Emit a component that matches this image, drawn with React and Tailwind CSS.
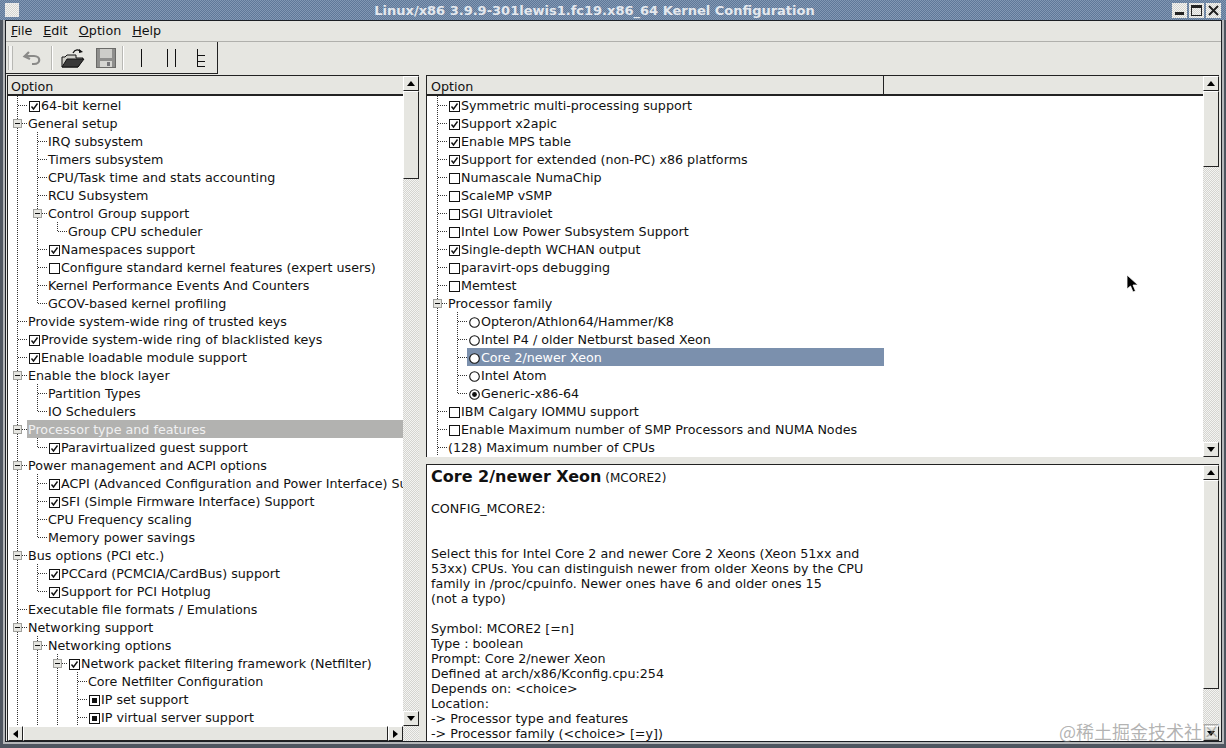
import React from "react";

const FONT = "font-['DejaVu_Sans',sans-serif]";
const STIPPLE = "bg-[repeating-conic-gradient(#d4d4d0_0%_25%,#f4f4f2_0%_50%)] bg-[length:2px_2px]";

const leftRows = [
  { l: 0, c: "on", t: "64-bit kernel" },
  { l: 0, e: 1, t: "General setup" },
  { l: 1, t: "IRQ subsystem" },
  { l: 1, t: "Timers subsystem" },
  { l: 1, t: "CPU/Task time and stats accounting" },
  { l: 1, t: "RCU Subsystem" },
  { l: 1, e: 1, t: "Control Group support" },
  { l: 2, t: "Group CPU scheduler" },
  { l: 1, c: "on", t: "Namespaces support" },
  { l: 1, c: "off", t: "Configure standard kernel features (expert users)" },
  { l: 1, t: "Kernel Performance Events And Counters" },
  { l: 1, t: "GCOV-based kernel profiling" },
  { l: 0, t: "Provide system-wide ring of trusted keys" },
  { l: 0, c: "on", t: "Provide system-wide ring of blacklisted keys" },
  { l: 0, c: "on", t: "Enable loadable module support" },
  { l: 0, e: 1, t: "Enable the block layer" },
  { l: 1, t: "Partition Types" },
  { l: 1, t: "IO Schedulers" },
  { l: 0, e: 1, t: "Processor type and features", sel: "grey" },
  { l: 1, c: "on", t: "Paravirtualized guest support" },
  { l: 0, e: 1, t: "Power management and ACPI options" },
  { l: 1, c: "on", t: "ACPI (Advanced Configuration and Power Interface) Support" },
  { l: 1, c: "on", t: "SFI (Simple Firmware Interface) Support" },
  { l: 1, t: "CPU Frequency scaling" },
  { l: 1, t: "Memory power savings" },
  { l: 0, e: 1, t: "Bus options (PCI etc.)" },
  { l: 1, c: "on", t: "PCCard (PCMCIA/CardBus) support" },
  { l: 1, c: "on", t: "Support for PCI Hotplug" },
  { l: 0, t: "Executable file formats / Emulations" },
  { l: 0, e: 1, t: "Networking support" },
  { l: 1, e: 1, t: "Networking options" },
  { l: 2, e: 1, c: "on", t: "Network packet filtering framework (Netfilter)" },
  { l: 3, t: "Core Netfilter Configuration" },
  { l: 3, c: "mod", t: "IP set support" },
  { l: 3, c: "mod", t: "IP virtual server support" },
];

const rightRows = [
  { l: 0, c: "on", t: "Symmetric multi-processing support" },
  { l: 0, c: "on", t: "Support x2apic" },
  { l: 0, c: "on", t: "Enable MPS table" },
  { l: 0, c: "on", t: "Support for extended (non-PC) x86 platforms" },
  { l: 0, c: "off", t: "Numascale NumaChip" },
  { l: 0, c: "off", t: "ScaleMP vSMP" },
  { l: 0, c: "off", t: "SGI Ultraviolet" },
  { l: 0, c: "off", t: "Intel Low Power Subsystem Support" },
  { l: 0, c: "on", t: "Single-depth WCHAN output" },
  { l: 0, c: "off", t: "paravirt-ops debugging" },
  { l: 0, c: "off", t: "Memtest" },
  { l: 0, e: 1, t: "Processor family" },
  { l: 1, c: "radio", t: "Opteron/Athlon64/Hammer/K8" },
  { l: 1, c: "radio", t: "Intel P4 / older Netburst based Xeon" },
  { l: 1, c: "radio", t: "Core 2/newer Xeon", sel: "blue" },
  { l: 1, c: "radio", t: "Intel Atom" },
  { l: 1, c: "radioOn", t: "Generic-x86-64" },
  { l: 0, c: "off", t: "IBM Calgary IOMMU support" },
  { l: 0, c: "off", t: "Enable Maximum number of SMP Processors and NUMA Nodes" },
  { l: 0, t: "(128) Maximum number of CPUs" },
];

const helpLines = [
  "CONFIG_MCORE2:",
  "",
  "",
  "Select this for Intel Core 2 and newer Core 2 Xeons (Xeon 51xx and",
  "53xx) CPUs. You can distinguish newer from older Xeons by the CPU",
  "family in /proc/cpuinfo. Newer ones have 6 and older ones 15",
  "(not a typo)",
  "",
  "Symbol: MCORE2 [=n]",
  "Type : boolean",
  "Prompt: Core 2/newer Xeon",
  "Defined at arch/x86/Kconfig.cpu:254",
  "Depends on: <choice>",
  "Location:",
  "-> Processor type and features",
  "-> Processor family (<choice> [=y])",
];

// does a row at this level have a following sibling (list is cut off at the bottom, so the end counts as open)
function continues(rows, i, level) {
  for (let j = i + 1; j < rows.length; j++) {
    if (rows[j].l === level) return true;
    if (rows[j].l < level) return false;
  }
  return true;
}

function Connector({ rows, i, level }) {
  const row = rows[i];
  const own = level === row.l;
  const more = continues(rows, i, level);
  if (!own && !more) return <span className="w-5 h-[18px] shrink-0" />;
  return (
    <svg className="w-5 h-[18px] shrink-0" viewBox="0 0 20 18" shapeRendering="crispEdges">
      <line x1="9.5" y1="0" x2="9.5" y2={more ? 18 : 9} stroke="#333" strokeDasharray="1 1" />
      {own && <line x1="10" y1="9.5" x2="20" y2="9.5" stroke="#333" strokeDasharray="1 1" />}
      {own && row.e && (
        <g>
          <rect x="5.5" y="5.5" width="8" height="8" fill="#e6e6e1" stroke="#a0a09c" />
          <line x1="7" y1="9.5" x2="12" y2="9.5" stroke="#111" />
        </g>
      )}
    </svg>
  );
}

function Mark({ c }) {
  if (c === "radio" || c === "radioOn") {
    return (
      <svg className="w-[11px] h-[11px] ml-px mr-px shrink-0" viewBox="0 0 11 11">
        <circle cx="5.5" cy="5.5" r="4.8" fill="#fff" stroke="#111" strokeWidth="1.1" />
        {c === "radioOn" && <circle cx="5.5" cy="5.5" r="2.4" fill="#111" />}
      </svg>
    );
  }
  return (
    <svg className="w-[11px] h-[11px] ml-px mr-[1px] shrink-0" viewBox="0 0 11 11" shapeRendering="crispEdges">
      <rect x="0.5" y="0.5" width="10" height="10" fill="#fff" stroke="#111" />
      {c === "on" && (
        <path d="M2.5 5.5 L4.5 8 L8.5 2.5" fill="none" stroke="#111" strokeWidth="1.4" shapeRendering="auto" />
      )}
      {c === "mod" && <rect x="3" y="3" width="5" height="5" fill="#111" />}
    </svg>
  );
}

function Tree({ rows, rowWidth, className = "" }) {
  return (
    <div className={"flex-1 min-h-0 overflow-hidden bg-white " + className}>
      {rows.map((row, i) => {
        const levels = Array.from({ length: row.l + 1 }, (_, k) => k);
        return (
          <div key={row.t} className="flex items-center h-[18px] whitespace-nowrap" style={{ width: rowWidth }}>
            {levels.map((k) => (
              <Connector key={k} rows={rows} i={i} level={k} />
            ))}
            <div
              className={
                "flex items-center flex-1 h-[18px] pt-[2px] " +
                (row.sel === "blue" ? "bg-[#7b90ad] text-white -ml-px pl-px " : "") +
                (row.sel === "grey" ? "bg-[#b2b2b0] text-[#f0f0f0] -ml-px pl-px " : "")
              }
            >
              {row.c && <Mark c={row.c} />}
              <span>{row.t}</span>
            </div>
          </div>
        );
      })}
    </div>
  );
}

function Arrow({ dir }) {
  const pts = { up: "0,5 4,0 8,5", down: "0,0 8,0 4,5", left: "5,0 5,8 0,4", right: "0,0 0,8 5,4" }[dir];
  const flat = dir === "up" || dir === "down";
  return (
    <svg className={flat ? "w-2 h-[5px]" : "w-[5px] h-2"} viewBox={flat ? "0 0 8 5" : "0 0 5 8"}>
      <polygon points={pts} fill="#000" />
    </svg>
  );
}

function ArrowButton({ dir, className = "" }) {
  return (
    <div className={"flex items-center justify-center shrink-0 bg-[#e6e6e1] border-t border-l border-t-white border-l-white border-r border-b border-r-[#222] border-b-[#222] " + className}>
      <Arrow dir={dir} />
    </div>
  );
}

function VScroll({ thumb }) {
  return (
    <div className="w-4 shrink-0 flex flex-col bg-[#e6e6e1]">
      <ArrowButton dir="up" className="h-[15px]" />
      <div className="bg-[#e6e6e1] border-t border-l border-white border-r border-b border-r-[#222] border-b-[#222] shrink-0" style={{ height: thumb }} />
      <div className={"flex-1 " + STIPPLE} />
      <ArrowButton dir="down" className="h-[15px]" />
    </div>
  );
}

function Toolbar() {
  return (
    <div className="h-[32px] flex shrink-0">
      <div className="w-[212px] h-[32px] flex items-center border-r border-b border-[#222] pl-[2px]">
        <span className="w-[5px] h-6 border-x border-[#b8b8b4] bg-[#f4f4f2] shrink-0" />
        <div className="w-[38px] flex justify-center">
          <svg className="w-5 h-5" viewBox="0 0 20 20" fill="none" stroke="#8a8a88" strokeWidth="2.2">
            <path d="M7 4 L2.5 8.5 L8 11" />
            <path d="M3 8 H12 C19 8 19 16 12 16 H10" />
          </svg>
        </div>
        <span className="w-[2px] h-6 border-l border-[#b8b8b4] bg-white shrink-0" />
        <div className="w-[39px] flex justify-center">
          <svg className="w-6 h-5" viewBox="0 0 24 20">
            <path d="M1 9 H4 L6 7 H15 V10 H22 L17 19 H1 Z" fill="#cfcfc9" stroke="#111" />
            <path d="M6 11 H23 L17 19 H1 Z" fill="#3a3a3a" stroke="#111" />
            <path d="M12 5 C14 1 18 1 20 4" fill="none" stroke="#111" strokeWidth="1.3" />
            <path d="M18 1 L22 4 L18 5 Z" fill="#111" />
          </svg>
        </div>
        <div className="w-[28px] flex justify-center">
          <svg className="w-5 h-5" viewBox="0 0 20 20" shapeRendering="crispEdges">
            <rect x="0.5" y="0.5" width="19" height="19" fill="#8f8f8d" stroke="#6a6a68" />
            <rect x="4" y="1" width="12" height="9" fill="#cdcdc9" />
            <rect x="4" y="13" width="12" height="6" fill="#d6d6d2" />
            <rect x="11" y="14" width="3" height="4" fill="#77777a" />
          </svg>
        </div>
        <span className="w-[2px] h-6 ml-[2px] border-l border-[#b8b8b4] bg-white shrink-0" />
        <div className="flex items-center ml-[17px]">
          <span className="w-px h-[18px] bg-[#111]" />
          <span className="w-px h-[18px] bg-[#111] ml-[25px]" />
          <span className="w-px h-[18px] bg-[#111] ml-[7px]" />
          <svg className="w-[9px] h-[18px] ml-[21px]" viewBox="0 0 9 18" shapeRendering="crispEdges" stroke="#111" fill="none">
            <path d="M0.5 0 V18 M0.5 6.5 H8 M0.5 12.5 H8 M0.5 17.5 H8" />
          </svg>
        </div>
      </div>
    </div>
  );
}

function TitleButton({ children }) {
  return (
    <div className={"w-[15px] h-[15px] flex items-center justify-center ml-[2px] " + STIPPLE}>{children}</div>
  );
}

export default function App() {
  return (
    <div
      className={
        "relative w-[1226px] h-[748px] overflow-hidden flex flex-col text-[12.7px] leading-[18px] text-[#111] bg-[#4f5660] " + FONT
      }
    >
      {/* Title bar */}
      <div className="h-5 shrink-0 flex items-center pl-[5px] pr-[5px] bg-[repeating-conic-gradient(#5f7898_0%_25%,#8298b4_0%_50%)] bg-[length:2px_2px]">
        <div className={"w-[14px] h-[14px] border border-[#e8e8e8] " + STIPPLE} />
        <div className="flex-1 text-center font-bold text-[13px] text-[#e4e8ee] pt-px truncate">
          Linux/x86 3.9.9-301lewis1.fc19.x86_64 Kernel Configuration
        </div>
        <TitleButton>
          <span className="w-[9px] h-[3px] bg-[#222] mt-[7px]" />
        </TitleButton>
        <TitleButton>
          <span className="w-[11px] h-[11px] border border-t-[3px] border-[#222]" />
        </TitleButton>
        <TitleButton>
          <svg className="w-[13px] h-[13px]" viewBox="0 0 13 13" stroke="#222" strokeWidth="2">
            <path d="M2 2 L11 11 M11 2 L2 11" />
          </svg>
        </TitleButton>
      </div>

      {/* Window, with the light band of the frame round it */}
      <div className="flex-1 min-h-0 ml-[3px] mr-[2px] mb-1 border-x-2 border-b-2 border-[#b4b6b8] flex flex-col">
        <div className="flex-1 min-h-0 border border-[#1c1f24] bg-[#e6e6e1] flex flex-col">
          <div className="h-[21px] shrink-0 flex items-center border-b border-[#b0b0ac] pl-[5px] gap-[11px]">
            {["File", "Edit", "Option", "Help"].map((m) => (
              <span key={m}>
                <span className="underline">{m[0]}</span>
                {m.slice(1)}
              </span>
            ))}
          </div>
          <Toolbar />

          <div className="flex-1 min-h-0 flex pl-px pr-[2px] mt-px">
            {/* Left pane */}
            <div className="w-[412px] shrink-0 flex flex-col border-t border-l border-[#222]">
              <div className="flex-1 min-h-0 flex">
                <div className="flex-1 min-w-0 flex flex-col">
                  <div className="h-5 shrink-0 pl-[3px] pt-1 flex items-center border-b-2 border-[#222]">Option</div>
                  <Tree rows={leftRows} />
                </div>
                <VScroll thumb={88} />
              </div>
              <div className="h-[15px] shrink-0 flex">
                <ArrowButton dir="left" className="w-[15px]" />
                <div className="flex-1 bg-[#e6e6e1] border-t border-l border-white border-r border-b border-r-[#222] border-b-[#222]" />
                <ArrowButton dir="right" className="w-[15px]" />
                <div className={"w-4 shrink-0 " + STIPPLE} />
              </div>
            </div>

            <div className="w-[7px] shrink-0" />

            {/* Right side */}
            <div className="flex-1 min-w-0 flex flex-col">
              <div className="h-[382px] shrink-0 flex border-t border-l border-[#222]">
                <div className="flex-1 min-w-0 flex flex-col">
                  <div className="h-5 shrink-0 flex items-center border-b-2 border-[#222]">
                    <div className="w-[457px] h-full pl-[4px] pt-1 flex items-center border-r border-[#222]">Option</div>
                  </div>
                  <Tree rows={rightRows} rowWidth={456} className="pl-px" />
                </div>
                <VScroll thumb={76} />
              </div>

              <div className="h-[7px] shrink-0" />

              {/* Help text */}
              <div className="flex-1 min-h-0 flex border-t border-l border-[#222]">
                <div className="flex-1 min-w-0 bg-white pl-[4px] pt-[2px] overflow-hidden leading-[15px]">
                  <div className="h-[31px] leading-[20px] whitespace-nowrap">
                    <span className="font-bold text-[16px]">Core 2/newer Xeon</span>
                    <span className="text-[12px]"> (MCORE2)</span>
                  </div>
                  <div className="pt-[3px]">
                    {helpLines.map((line, i) => (
                      <div key={i} className="h-[15px] whitespace-nowrap">
                        {line}
                      </div>
                    ))}
                  </div>
                </div>
                <VScroll thumb={209} />
              </div>
            </div>
          </div>
        </div>
      </div>

      {/* Watermark over the corner */}
      <div className="absolute left-[1059px] top-[720px] text-[18px] leading-[22px] text-[#808080]/60 font-['Noto_Sans_CJK_SC',sans-serif] whitespace-nowrap">
        @稀土掘金技术社区
      </div>

      {/* Mouse pointer */}
      <svg className="absolute left-[1126px] top-[274px] w-[13px] h-5" viewBox="0 0 13 20">
        <path d="M1 1 V15 L4.5 12 L7 18 L9.5 17 L7 11 H12 Z" fill="#000" stroke="#fff" strokeWidth="0.8" />
      </svg>
    </div>
  );
}
